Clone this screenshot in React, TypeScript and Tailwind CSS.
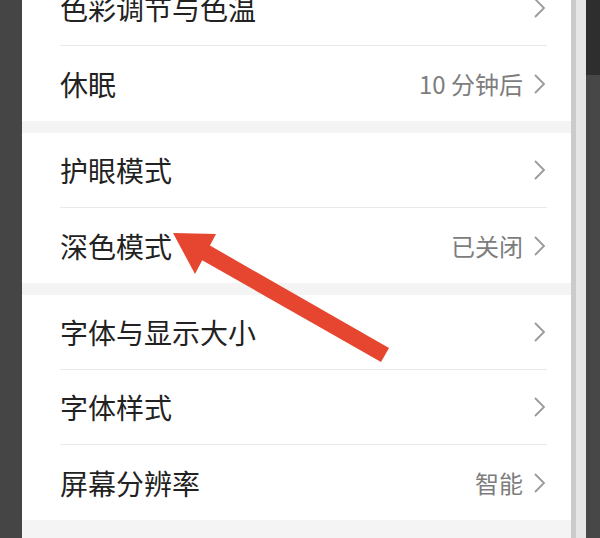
import React from "react";

type Row = { label: string; value?: string };

const GROUPS: Row[][] = [
  [{ label: "色彩调节与色温" }, { label: "休眠", value: "10 分钟后" }],
  [{ label: "护眼模式" }, { label: "深色模式", value: "已关闭" }],
  [{ label: "字体与显示大小" }, { label: "字体样式" }, { label: "屏幕分辨率", value: "智能" }],
];

function Chevron() {
  return (
    <svg width="14" height="24" viewBox="0 0 14 24" className="ml-[10px] shrink-0">
      <polyline points="2,3 11,12 2,21" fill="none" stroke="#9a9a9a" strokeWidth="1.8" />
    </svg>
  );
}

function SettingRow({ row, last }: { row: Row; last: boolean }) {
  return (
    <div className="pl-[38px] pr-[24px]">
      <div className={`flex h-[75px] items-center ${last ? "" : "border-b border-[#e9e9e9]"}`}>
        <span className="flex-1 text-[28px] leading-none text-[#222]">{row.label}</span>
        {row.value && <span className="text-[24px] leading-none text-[#7d7d7d]">{row.value}</span>}
        <Chevron />
      </div>
    </div>
  );
}

export default function App() {
  return (
    <div
      className="relative flex h-[538px] w-[600px] overflow-hidden"
      style={{ fontFamily: '"Noto Sans CJK SC", "Noto Sans", sans-serif' }}
    >
      {/* left dark edge */}
      <div className="w-[22px] shrink-0 bg-[#454545]" />

      {/* settings list */}
      <div className="flex-1 bg-[#f4f4f4]">
        <div className="-mt-[29px] flex flex-col gap-[12px]">
          {GROUPS.map((g, gi) => (
            <div key={gi} className="bg-white">
              {g.map((r, ri) => (
                <SettingRow key={r.label} row={r} last={ri === g.length - 1} />
              ))}
            </div>
          ))}
        </div>
      </div>

      {/* right edge */}
      <div className="w-[5px] shrink-0 bg-[#cbcbcb]" />
      <div className="w-[10px] shrink-0 bg-[#e6e6e6]" />
      <div className="flex w-[14px] shrink-0 flex-col">
        <div className="h-[75px] bg-[#2e2e2e]" />
        <div className="flex-1 bg-[#474747]" />
      </div>

      {/* red annotation arrow */}
      <svg className="pointer-events-none absolute inset-0" width="600" height="538" viewBox="0 0 600 538">
        <polygon points="173,233 216,234 195,274" fill="#e6452f" />
        <polygon points="200,259 209,245 389,348 381,362" fill="#e6452f" />
      </svg>
    </div>
  );
}
